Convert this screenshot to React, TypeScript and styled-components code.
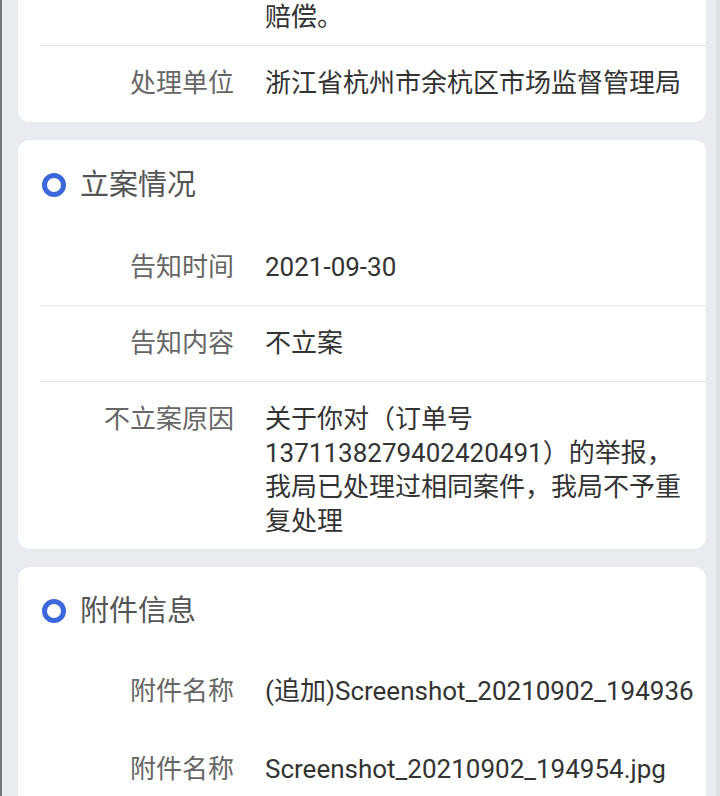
import React from "react";
import styled, { createGlobalStyle } from "styled-components";

const Global = createGlobalStyle`
  html, body { margin: 0; padding: 0; }
  body {
    background: #e8ebef;
    font-family: Roboto, "Noto Sans CJK SC", "Noto Sans", sans-serif;
    overflow: hidden;
  }
`;

const Screen = styled.div`
  display: flex;
  width: 720px;
  height: 796px;
  overflow: hidden;
  border-left: 2px solid #72767b;
  box-sizing: border-box;
`;

const Main = styled.div`
  flex: 1;
  display: flex;
  flex-direction: column;
  gap: 18px;
  padding: 0 10px 0 16px;
`;

const ScrollTrack = styled.div`
  width: 8px;
  background: #dcdfe4;
`;

const Card = styled.section<{ $offset?: number }>`
  background: #ffffff;
  border-radius: 12px;
  padding-left: 22px;
  margin-top: ${(p) => p.$offset ?? 0}px;
  display: flex;
  flex-direction: column;
  flex-shrink: 0;
`;

const Header = styled.div<{ $h?: number }>`
  height: ${(p) => p.$h ?? 90}px;
  display: flex;
  align-items: center;
  gap: 14px;
  padding-left: 2px;
`;

const Ring = styled.span`
  width: 24px;
  height: 24px;
  box-sizing: border-box;
  border-radius: 50%;
  border: 5px solid #3c68dc;
`;

const Title = styled.h2`
  margin: 0;
  font-size: 29px;
  font-weight: 400;
  color: #555555;
  line-height: 42px;
`;

const Row = styled.div<{ $divider?: boolean; $min?: number; $pb?: number }>`
  display: flex;
  align-items: flex-start;
  gap: 31px;
  box-sizing: border-box;
  min-height: ${(p) => p.$min ?? 76}px;
  padding: 20px 12px ${(p) => p.$pb ?? 11}px 0;
  border-bottom: 1px solid ${(p) => (p.$divider ? "#e6e6e6" : "transparent")};
  font-size: 26px;
  line-height: 34px;
`;

const Label = styled.div`
  width: 194px;
  flex-shrink: 0;
  text-align: right;
  color: #666666;
`;

const Value = styled.div<{ $nowrap?: boolean }>`
  flex: 1;
  min-width: 0;
  color: #333333;
  white-space: ${(p) => (p.$nowrap ? "nowrap" : "normal")};
  overflow: ${(p) => (p.$nowrap ? "hidden" : "visible")};
`;

type Item = { label: string; value: string };

const Section = ({
  title,
  headerHeight,
  children,
}: {
  title: string;
  headerHeight?: number;
  children: React.ReactNode;
}) => (
  <Card>
    <Header $h={headerHeight}>
      <Ring />
      <Title>{title}</Title>
    </Header>
    {children}
  </Card>
);

const caseItems: Item[] = [
  { label: "告知时间", value: "2021-09-30" },
  { label: "告知内容", value: "不立案" },
  {
    label: "不立案原因",
    value: "关于你对（订单号1371138279402420491）的举报，我局已处理过相同案件，我局不予重复处理",
  },
];

const files: Item[] = [
  { label: "附件名称", value: "(追加)Screenshot_20210902_194936" },
  { label: "附件名称", value: "Screenshot_20210902_194954.jpg" },
];

export default function App() {
  return (
    <>
      <Global />
      <Screen>
        <Main>
          <Card $offset={-20}>
            <Row $divider $min={0}>
              <Label />
              <Value>赔偿。</Value>
            </Row>
            <Row>
              <Label>处理单位</Label>
              <Value>浙江省杭州市余杭区市场监督管理局</Value>
            </Row>
          </Card>
          <Section title="立案情况">
            {caseItems.map((it, i) => (
              <Row
                key={i}
                $divider={i < caseItems.length - 1}
                $pb={i === caseItems.length - 1 ? 10 : 11}
              >
                <Label>{it.label}</Label>
                <Value>{it.value}</Value>
              </Row>
            ))}
          </Section>
          <Section title="附件信息" headerHeight={87}>
            {files.map((it, i) => (
              <Row key={i} $min={78}>
                <Label>{it.label}</Label>
                <Value $nowrap>{it.value}</Value>
              </Row>
            ))}
          </Section>
        </Main>
        <ScrollTrack />
      </Screen>
    </>
  );
}
